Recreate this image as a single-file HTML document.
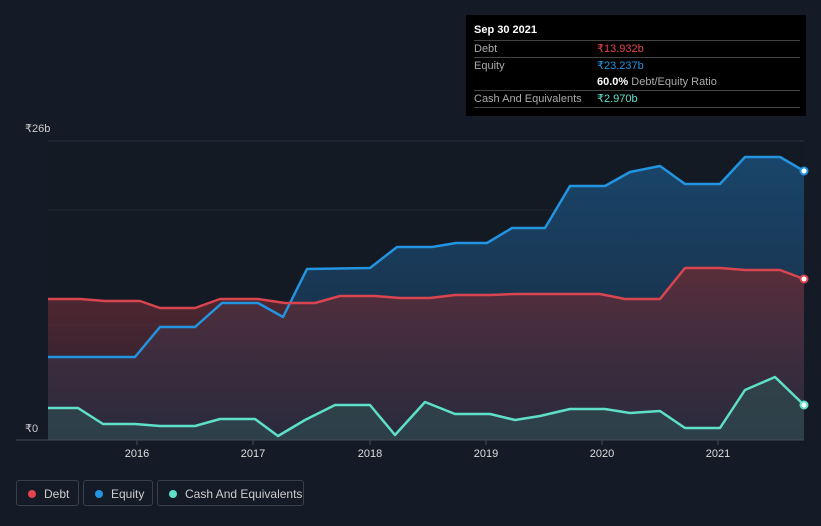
<!DOCTYPE html><html><head><style>
body{margin:0;background:#151b26;width:821px;height:526px;overflow:hidden;font-family:"Liberation Sans",sans-serif;position:relative}
.tt{position:absolute;left:466px;top:15px;width:340px;height:101px;background:#000;color:#fff;font-size:11px}
.tt .r{position:absolute;left:8px;width:326px;border-top:1px solid #444;height:17px;line-height:17px;color:#aaa}
.tt .v{position:absolute;left:123px}
.lg{position:absolute;top:480px;height:26px;border:1px solid #3a404a;border-radius:3px;color:#ccc;font-size:12px;line-height:26px;box-sizing:border-box}
.lg i{position:absolute;left:11px;top:9px;width:8px;height:8px;border-radius:50%}
.lg span{position:absolute;left:27px}
</style></head><body>
<svg width="821" height="526" style="position:absolute;left:0;top:0">
<defs>
<linearGradient id="ge" x1="0" y1="0" x2="0" y2="1"><stop offset="0" stop-color="#1a4a72" stop-opacity=".9"/><stop offset="1" stop-color="#1a3550" stop-opacity=".6"/></linearGradient>
<linearGradient id="gd" x1="0" y1="0" x2="0" y2="1"><stop offset="0" stop-color="#6a2a33" stop-opacity=".8"/><stop offset="1" stop-color="#3a2a3a" stop-opacity=".5"/></linearGradient>
</defs>
<rect x="48" y="141" width="756" height="299" fill="#141a24"/>
<line x1="48" y1="141" x2="804" y2="141" stroke="#2c323c"/>
<line x1="48" y1="210" x2="804" y2="210" stroke="#232a35"/>
<line x1="48" y1="325" x2="804" y2="325" stroke="#232a35"/>
<g stroke-linejoin="round" stroke-width="2.5" fill-opacity="1">
<polygon fill="url(#ge)" points="48,440 48,357 135,357 160,327 195,327 222,303 258,303 283,317 307,269 370,268 397,247 432,247 456,243 487,243 512,228 545,228 570,186 605,186 630,172 660,166 685,184 720,184 745,157 780,157 804,171 804,440"/>
<polygon fill="url(#gd)" points="48,440 48,299 80,299 105,301 140,301 160,308 195,308 220,299 258,299 285,303 315,303 340,296 375,296 400,298 430,298 455,295 490,295 515,294 600,294 625,299 660,299 685,268 720,268 745,270 780,270 804,279 804,440"/>
<polygon fill="#2f4a4e" fill-opacity=".7" points="48,440 48,408 78,408 103,424 135,424 160,426 195,426 220,419 255,419 278,436 305,420 335,405 370,405 395,435 425,402 455,414 490,414 515,420 540,416 570,409 605,409 630,413 660,411 685,428 720,428 745,390 775,377 804,405 804,440"/>
<polyline fill="none" stroke="#2394e0" points="48,357 135,357 160,327 195,327 222,303 258,303 283,317 307,269 370,268 397,247 432,247 456,243 487,243 512,228 545,228 570,186 605,186 630,172 660,166 685,184 720,184 745,157 780,157 804,171"/>
<polyline fill="none" stroke="#d9454f" points="48,299 80,299 105,301 140,301 160,308 195,308 220,299 258,299 285,303 315,303 340,296 375,296 400,298 430,298 455,295 490,295 515,294 600,294 625,299 660,299 685,268 720,268 745,270 780,270 804,279"/>
<polyline fill="none" stroke="#5ee0c8" points="48,408 78,408 103,424 135,424 160,426 195,426 220,419 255,419 278,436 305,420 335,405 370,405 395,435 425,402 455,414 490,414 515,420 540,416 570,409 605,409 630,413 660,411 685,428 720,428 745,390 775,377 804,405"/>
</g>
<circle cx="804" cy="171" r="3.5" fill="#fff" stroke="#2394e0" stroke-width="2"/>
<circle cx="804" cy="279" r="3.5" fill="#fff" stroke="#d9454f" stroke-width="2"/>
<circle cx="804" cy="405" r="3.5" fill="#fff" stroke="#5ee0c8" stroke-width="2"/>
<line x1="16" y1="440" x2="804" y2="440" stroke="#444a55"/>
<g stroke="#444a55"><line x1="137" y1="440" x2="137" y2="445"/><line x1="253" y1="440" x2="253" y2="445"/><line x1="370" y1="440" x2="370" y2="445"/><line x1="486" y1="440" x2="486" y2="445"/><line x1="602" y1="440" x2="602" y2="445"/><line x1="718" y1="440" x2="718" y2="445"/></g>
<g fill="#ddd" font-size="11" text-anchor="middle" font-family="Liberation Sans"><text x="137" y="457">2016</text><text x="253" y="457">2017</text><text x="370" y="457">2018</text><text x="486" y="457">2019</text><text x="602" y="457">2020</text><text x="718" y="457">2021</text></g>
<text x="25" y="132" fill="#ccc" font-size="11" font-family="Liberation Sans">₹26b</text>
<text x="25" y="432" fill="#ccc" font-size="11" font-family="Liberation Sans">₹0</text>
</svg>
<div class="tt">
<div style="position:absolute;left:8px;top:9px;font-weight:bold;color:#fff">Sep 30 2021</div>
<div class="r" style="top:25px">Debt<span class="v" style="color:#e5434d">₹13.932b</span></div>
<div class="r" style="top:42px">Equity<span class="v" style="color:#2394e0">₹23.237b</span></div>
<div class="r" style="top:59px;border-top:none"><span class="v"><b style="color:#fff">60.0%</b> Debt/Equity Ratio</span></div>
<div class="r" style="top:75px">Cash And Equivalents<span class="v" style="color:#5ee0c8">₹2.970b</span></div>
<div class="r" style="top:92px;height:0"></div>
</div>
<div class="lg" style="left:16px;width:63px"><i style="background:#e5434d"></i><span>Debt</span></div>
<div class="lg" style="left:83px;width:70px"><i style="background:#2394e0"></i><span>Equity</span></div>
<div class="lg" style="left:157px;width:147px"><i style="background:#5ee0c8"></i><span>Cash And Equivalents</span></div>
</body></html>
